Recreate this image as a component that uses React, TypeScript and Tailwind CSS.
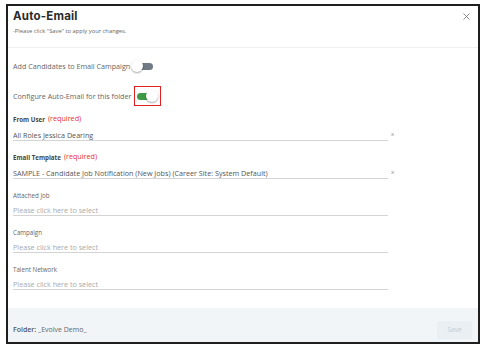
import { X } from 'lucide-react'

const font = { fontFamily: '"Open Sans", "Liberation Sans", sans-serif' }

function Toggle({ on }: { on: boolean }) {
  if (on) {
    return (
      <div className="relative w-[21px] h-[12px]">
        <div className="absolute left-0 top-[3px] w-[15px] h-[7px] rounded-full bg-[#3f9a47]" />
        <div className="absolute right-0 top-0 w-[12px] h-[12px] rounded-full bg-white shadow-[0_1px_2px_rgba(0,0,0,0.35)]" />
      </div>
    )
  }
  return (
    <div className="relative w-[22px] h-[12px]">
      <div className="absolute left-[6px] top-[3px] w-[16px] h-[7px] rounded-full bg-[#6f7a85]" />
      <div className="absolute left-0 top-0 w-[12px] h-[12px] rounded-full bg-white shadow-[0_1px_2px_rgba(0,0,0,0.35)]" />
    </div>
  )
}

const fields = [
  { label: 'From User', required: true, value: 'All Roles Jessica Dearing' },
  { label: 'Email Template', required: true, value: 'SAMPLE - Candidate Job Notification (New Jobs) (Career Site: System Default)' },
  { label: 'Attached Job', required: false, value: '' },
  { label: 'Campaign', required: false, value: '' },
  { label: 'Talent Network', required: false, value: '' },
]

export default function App() {
  return (
    <div className="w-[484px] h-[350px] bg-white pt-[4px] pl-[6px]" style={font}>
      <div className="w-[474px] h-[340px] border-2 border-[#1f1f1f] bg-white flex flex-col">
        <div className="flex justify-between pl-[5px] pr-[6px] pt-[3px] pb-[12px] border-b border-[#f0f0f0]">
          <div>
            <div className="h-[14px] leading-[14px] text-[11.5px] font-bold text-[#2b2b2b] tracking-[0.2px]" style={{ fontFamily: 'Inter, "Liberation Sans", sans-serif' }}>Auto-Email</div>
            <div className="mt-[4px] h-[8px] leading-[8px] text-[5.8px] text-[#666]">-Please click "Save" to apply your changes.</div>
          </div>
          <X className="mt-[2px] w-[11px] h-[11px] text-[#666]" strokeWidth={1.6} />
        </div>

        <div className="flex-1 pl-[5px]">
          <div className="mt-[8px] h-[20px] flex items-center">
            <span className="text-[7.2px] text-[#666]">Add Candidates to Email Campaign</span>
            <div className="ml-[1px]"><Toggle on={false} /></div>
          </div>
          <div className="mt-[10px] h-[20px] flex items-center">
            <span className="text-[7.2px] text-[#666]">Configure Auto-Email for this folder</span>
            <div className="ml-[3px] h-[20px] border-[1.5px] border-[#e02020] px-[2px] flex items-center">
              <Toggle on={true} />
            </div>
          </div>

          <div className="mt-[9px] flex flex-col gap-[12.5px]">
            {fields.map(f => (
              <div key={f.label}>
                <div className="h-[10px] flex items-center gap-[3px]">
                  <span className={`text-[6.2px] ${f.required ? 'font-bold text-[#444]' : 'text-[#666]'}`}>{f.label}</span>
                  {f.required && <span className="text-[7.2px] text-[#e8312f] -mt-[3px]">(required)</span>}
                </div>
                <div className="mt-[2.5px] flex items-end">
                  <div className={`w-[375px] h-[12px] leading-[12px] text-[7.2px] border-b-[1.5px] border-[#d4d4d4] truncate ${f.value ? 'text-[#555]' : 'text-[#aaa]'}`}>
                    {f.value || 'Please click here to select'}
                  </div>
                  {f.value && <span className="ml-[3px] text-[6px] text-[#888] leading-[12px] mb-[1px]">x</span>}
                </div>
              </div>
            ))}
          </div>
        </div>

        <div className="h-[34px] bg-[#f2f5f8] flex items-center justify-between pl-[5px] pr-[6px] pt-[10px]">
          <span className="text-[7px] text-[#666]"><span className="font-semibold text-[#555]">Folder:</span> _Evolve Demo_</span>
          <button className="w-[35px] h-[18px] rounded-[2px] bg-[#eaeff4] text-[6.5px] text-[#c3cbd3]">Save</button>
        </div>
      </div>
    </div>
  )
}
